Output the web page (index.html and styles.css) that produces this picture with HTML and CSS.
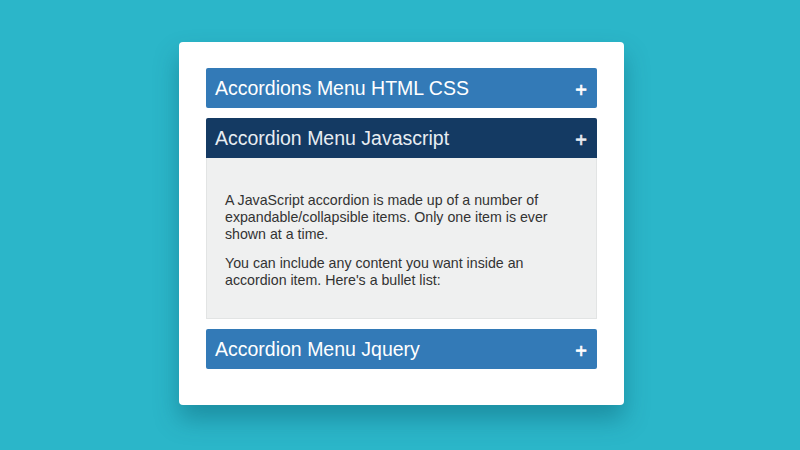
FILE: index.html
```html
<!DOCTYPE html>
<html lang="en">
<head>
<meta charset="utf-8">
<title>Accordion</title>
<link rel="stylesheet" href="styles.css">
</head>
<body>
  <main class="stage">
    <section class="card">
      <div class="accordion">
        <div class="item">
          <button class="head">Accordions Menu HTML CSS<span class="sign">+</span></button>
        </div>
        <div class="item open">
          <button class="head">Accordion Menu Javascript<span class="sign">+</span></button>
          <div class="panel">
            <p>A JavaScript accordion is made up of a number of expandable/collapsible items. Only one item is ever shown at a time.</p>
            <p>You can include any content you want inside an accordion item. Here's a bullet list:</p>
          </div>
        </div>
        <div class="item">
          <button class="head">Accordion Menu Jquery<span class="sign">+</span></button>
        </div>
      </div>
    </section>
  </main>
</body>
</html>
```
FILE: styles.css
```css
* { box-sizing: border-box; }

html, body {
  margin: 0;
  height: 100%;
}

body {
  background: #2bb6c9;
  font-family: "Liberation Sans", Arial, sans-serif;
}

.stage {
  height: 450px;
  display: flex;
  justify-content: flex-start;
  padding: 42px 0 0 179px;
}

.card {
  width: 445px;
  height: 363px;
  background: #fff;
  border-radius: 4px;
  padding: 26px 27px;
  box-shadow: 0 14px 24px rgba(0, 70, 90, 0.35);
}

.accordion {
  display: flex;
  flex-direction: column;
  gap: 10px;
}

.head {
  display: flex;
  align-items: center;
  justify-content: space-between;
  width: 100%;
  height: 40px;
  padding: 0 10px 0 9px;
  border: 0;
  border-radius: 2px;
  background: #337ab7;
  color: #fff;
  font-family: inherit;
  font-size: 19.5px;
  text-align: left;
  cursor: pointer;
}

.open .head {
  background: #143a63;
  color: #e8edf2;
  border-radius: 2px 2px 0 0;
}

.sign {
  font-size: 20px;
  line-height: 1;
  margin-top: 3px;
  -webkit-text-stroke: 0.6px currentColor;
}

.panel {
  background: #eff0f0;
  border: 1px solid #e2e4e4;
  border-top: 0;
  height: 161px;
  padding: 22px 18px 0 18px;
  color: #333;
  font-size: 14.2px;
  line-height: 17px;
}

.panel p {
  margin: 12px 0;
}
```
